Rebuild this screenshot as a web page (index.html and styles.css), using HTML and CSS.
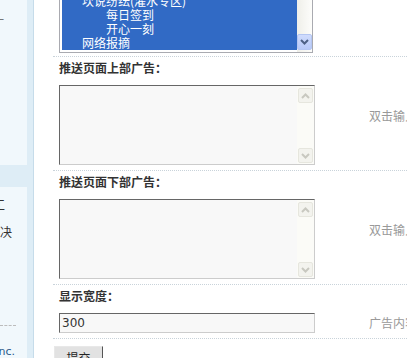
FILE: index.html
```html
<!DOCTYPE html>
<html lang="zh-CN">
<head>
<meta charset="utf-8">
<title>广告设置</title>
<link rel="stylesheet" href="styles.css">
</head>
<body>
<div class="page">
  <aside class="side">
    <div class="panel p1">
      <div class="cut c-top"><span>系统一</span></div>
    </div>
    <div class="panel p2">
      <div class="cut c-a"><span>常用工</span></div>
      <div class="cut c-b"><span>问题解决</span></div>
      <div class="dash"></div>
      <div class="cut c-inc"><span>Comsenz Inc.</span></div>
    </div>
  </aside>
  <main class="main">
    <div class="form">
      <div class="row">
        <div class="field">
          <div class="listbox">
            <div class="opts">
              <div class="opt l1">坎说纷纭(灌水专区)</div>
              <div class="opt l2">每日签到</div>
              <div class="opt l2">开心一刻</div>
              <div class="opt l1">网络报摘</div>
            </div>
            <div class="lsb">
              <div class="lsb-track"></div>
              <div class="lsb-btn">
                <svg width="9" height="6" viewBox="0 0 9 6"><path d="M1 1 L4.5 4.5 L8 1" fill="none" stroke="#4d6185" stroke-width="2"/></svg>
              </div>
            </div>
          </div>
        </div>
      </div>

      <div class="row">
        <div class="lbl">推送页面上部广告：</div>
        <div class="field">
          <div class="ctrl">
            <div class="tarea">
              <div class="tarea-in"></div>
              <div class="tsb">
                <div class="tsb-btn"><svg width="9" height="6" viewBox="0 0 9 6"><path d="M1 5 L4.5 1.5 L8 5" fill="none" stroke="#c8c8c0" stroke-width="2"/></svg></div>
                <div class="tsb-btn"><svg width="9" height="6" viewBox="0 0 9 6"><path d="M1 1 L4.5 4.5 L8 1" fill="none" stroke="#c8c8c0" stroke-width="2"/></svg></div>
              </div>
            </div>
          </div>
          <div class="tip tip-ta">双击输入框可扩大/缩小</div>
        </div>
      </div>

      <div class="row">
        <div class="lbl">推送页面下部广告：</div>
        <div class="field">
          <div class="ctrl">
            <div class="tarea">
              <div class="tarea-in"></div>
              <div class="tsb">
                <div class="tsb-btn"><svg width="9" height="6" viewBox="0 0 9 6"><path d="M1 5 L4.5 1.5 L8 5" fill="none" stroke="#c8c8c0" stroke-width="2"/></svg></div>
                <div class="tsb-btn"><svg width="9" height="6" viewBox="0 0 9 6"><path d="M1 1 L4.5 4.5 L8 1" fill="none" stroke="#c8c8c0" stroke-width="2"/></svg></div>
              </div>
            </div>
          </div>
          <div class="tip tip-ta">双击输入框可扩大/缩小</div>
        </div>
      </div>

      <div class="row">
        <div class="lbl">显示宽度：</div>
        <div class="field">
          <div class="ctrl">
            <div class="txt">300</div>
          </div>
          <div class="tip tip-in">广告内容显示的宽度</div>
        </div>
      </div>

      <div class="actions">
        <button class="btn" type="button">提交</button>
      </div>
    </div>
  </main>
</div>
</body>
</html>
```

FILE: styles.css
```css
html, body {
  margin: 0;
  padding: 0;
  background: #fff;
}
body {
  width: 407px;
  height: 358px;
  overflow: hidden;
  font-family: "Noto Sans CJK SC", "DejaVu Sans", sans-serif;
  font-size: 12px;
  color: #333;
}
.page {
  display: flex;
  height: 358px;
}

/* sidebar */
.side {
  width: 33px;
  flex: none;
  background: #deedf6;
  border-right: 1px solid #c6dcea;
  display: flex;
  flex-direction: column;
}
.panel {
  width: 27px;
  background: #f1f8fc;
  overflow: hidden;
}
.p1 {
  height: 165px;
}
.p2 {
  margin-top: 22px;
  flex: 1;
}
.cut {
  display: flex;
  justify-content: flex-end;
  white-space: nowrap;
  overflow: hidden;
  line-height: 18px;
  height: 18px;
}
.cut span { flex: none; }
.c-top {
  margin-top: 11px;
  padding-right: 23px;
  color: #777;
}
.c-a {
  margin-top: 9px;
  padding-right: 22px;
}
.c-b {
  margin-top: 9px;
  padding-right: 15px;
}
.dash {
  width: 16px;
  margin-top: 84px;
  border-top: 1px dashed #bcbcbc;
}
.c-inc {
  margin-top: 17px;
  padding-right: 12px;
  font-family: "DejaVu Sans", sans-serif;
  font-size: 11px;
  color: #2a5a8a;
}

/* main */
.main {
  flex: 1;
  min-width: 0;
}
.form {
  margin-left: 19px;
}
.row {
  border-bottom: 1px dotted #c9d3da;
}
.row:first-child {
  margin-top: -20px;
}
.lbl {
  padding: 2px 0 0 6px;
  line-height: 18px;
  font-weight: bold;
  color: #333;
  margin-bottom: 8px;
}
.field {
  display: flex;
  align-items: flex-start;
  padding: 0 0 5px 6px;
}
.row:first-child .field {
  padding-bottom: 3px;
}
.ctrl {
  width: 304px;
  flex: none;
}
.tip {
  padding-left: 6px;
  white-space: nowrap;
  color: #999;
  line-height: 18px;
}
.tip-ta { padding-top: 22px; }
.tip-in { padding-top: 1px; }

/* listbox (multi select) */
.listbox {
  width: 254px;
  height: 73px;
  box-sizing: border-box;
  border: 1px solid #a9aab0;
  display: flex;
  background: #fff;
}
.opts {
  flex: 1;
  margin: 2px 0 2px 2px;
  background: #316ac5;
  color: #fff;
  display: flex;
  flex-direction: column;
  justify-content: flex-end;
  overflow: hidden;
}
.opt {
  line-height: 14px;
  height: 14px;
  white-space: nowrap;
}
.l1 { padding-left: 20px; }
.l2 { padding-left: 44px; }
.lsb {
  width: 15px;
  flex: none;
  display: flex;
  flex-direction: column;
  padding-bottom: 2px;
  background: linear-gradient(to right, #efefe9, #fdfdfb);
}
.lsb-track { flex: 1; }
.lsb-btn {
  height: 16px;
  box-sizing: border-box;
  border: 1px solid #b4c6f2;
  border-radius: 2px;
  background: linear-gradient(to bottom, #d0dcfd, #b7c9f8);
  display: flex;
  align-items: center;
  justify-content: center;
}

/* textarea */
.tarea {
  width: 256px;
  height: 80px;
  box-sizing: border-box;
  border: 1px solid;
  border-color: #666 #ccc #ccc #666;
  background: #f8f8f8;
  display: flex;
}
.tarea-in { flex: 1; }
.tsb {
  width: 17px;
  flex: none;
  box-sizing: border-box;
  padding: 2px 1px 1px 1px;
  background: #fbfbf7;
  display: flex;
  flex-direction: column;
  justify-content: space-between;
}
.tsb-btn {
  height: 15px;
  box-sizing: border-box;
  border: 1px solid #e6e6de;
  border-radius: 2px;
  background: #f3f3ee;
  display: flex;
  align-items: center;
  justify-content: center;
}

/* text input */
.txt {
  width: 256px;
  height: 20px;
  box-sizing: border-box;
  border: 1px solid;
  border-color: #666 #ccc #ccc #666;
  background: #f8f8f8;
  padding-left: 2px;
  font-family: "DejaVu Sans", sans-serif;
  font-size: 12px;
  line-height: 18px;
  color: #333;
}

/* submit */
.actions {
  padding: 7px 0 0 1px;
}
.btn {
  font-family: "Noto Sans CJK SC", sans-serif;
  font-size: 12px;
  color: #222;
  width: 49px;
  height: 24px;
  padding: 0;
  background: #e2e2e2;
  border: 1px solid;
  border-color: #e8e8e8 #555 #555 #e8e8e8;
  line-height: 20px;
}
```
